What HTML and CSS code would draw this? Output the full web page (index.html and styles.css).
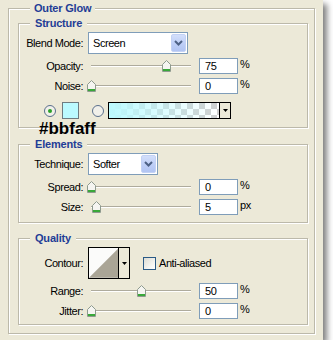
FILE: index.html
```html
<!DOCTYPE html>
<html>
<head>
<meta charset="utf-8">
<link rel="stylesheet" href="styles.css">
</head>
<body>
<div class="panel">
  <section class="group outer">
    <div class="title outer-title">Outer Glow</div>

    <section class="group sub structure">
      <div class="title">Structure</div>
      <div class="row tall">
        <span class="label">Blend Mode:</span>
        <div class="combo blend"><span class="val">Screen</span><span class="btn"><svg width="9" height="6" viewBox="0 0 9 6"><path d="M1 1 L4.5 4.5 L8 1" fill="none" stroke="#4d6185" stroke-width="2"/></svg></span></div>
      </div>
      <div class="row">
        <span class="label">Opacity:</span>
        <div class="slider"><span class="track"></span><span class="thumb" style="left:74px"><svg width="9" height="12" viewBox="0 0 9 12"><path d="M0.5 4.5 L4.5 0.5 L8.5 4.5 V11.5 H0.5 Z" fill="#f5f5f1" stroke="#8e9a8e"/><path d="M1 10 H8" stroke="#39a839" stroke-width="2"/></svg></span></div>
        <span class="num">75</span><span class="unit">%</span>
      </div>
      <div class="row">
        <span class="label">Noise:</span>
        <div class="slider"><span class="track"></span><span class="thumb" style="left:-1px"><svg width="9" height="12" viewBox="0 0 9 12"><path d="M0.5 4.5 L4.5 0.5 L8.5 4.5 V11.5 H0.5 Z" fill="#f5f5f1" stroke="#8e9a8e"/><path d="M1 10 H8" stroke="#39a839" stroke-width="2"/></svg></span></div>
        <span class="num">0</span><span class="unit">%</span>
      </div>
      <div class="colorrow">
        <span class="radio"><svg width="12" height="12" viewBox="0 0 12 12"><circle cx="6" cy="6" r="5.5" fill="#f1f0ea" stroke="#5a6f8c"/><circle cx="6" cy="6" r="2" fill="#2aa12a"/></svg></span>
        <span class="swatch"></span>
        <span class="radio r2"><svg width="12" height="12" viewBox="0 0 12 12"><circle cx="6" cy="6" r="5.5" fill="#f1f0ea" stroke="#5a6f8c"/></svg></span>
        <span class="gradbox"><span class="grad"></span><span class="arrow"><svg width="5" height="3" viewBox="0 0 5 3"><path d="M0 0 H5 L2.5 3 Z" fill="#000"/></svg></span></span>
      </div>
      <div class="annot">#bbfaff</div>
    </section>

    <section class="group sub elements">
      <div class="title">Elements</div>
      <div class="row tall">
        <span class="label">Technique:</span>
        <div class="combo tech"><span class="val">Softer</span><span class="btn"><svg width="9" height="6" viewBox="0 0 9 6"><path d="M1 1 L4.5 4.5 L8 1" fill="none" stroke="#4d6185" stroke-width="2"/></svg></span></div>
      </div>
      <div class="row">
        <span class="label">Spread:</span>
        <div class="slider"><span class="track"></span><span class="thumb" style="left:-1px"><svg width="9" height="12" viewBox="0 0 9 12"><path d="M0.5 4.5 L4.5 0.5 L8.5 4.5 V11.5 H0.5 Z" fill="#f5f5f1" stroke="#8e9a8e"/><path d="M1 10 H8" stroke="#39a839" stroke-width="2"/></svg></span></div>
        <span class="num">0</span><span class="unit">%</span>
      </div>
      <div class="row">
        <span class="label">Size:</span>
        <div class="slider"><span class="track"></span><span class="thumb" style="left:4px"><svg width="9" height="12" viewBox="0 0 9 12"><path d="M0.5 4.5 L4.5 0.5 L8.5 4.5 V11.5 H0.5 Z" fill="#f5f5f1" stroke="#8e9a8e"/><path d="M1 10 H8" stroke="#39a839" stroke-width="2"/></svg></span></div>
        <span class="num">5</span><span class="unit">px</span>
      </div>
    </section>

    <section class="group sub quality">
      <div class="title">Quality</div>
      <div class="row contour-row">
        <span class="label">Contour:</span>
        <span class="contour"><svg class="curve" width="30" height="30" viewBox="0 0 30 30"><rect width="30" height="30" fill="#fbfbfa"/><path d="M0 30 L30 0 V30 Z" fill="#aaa596"/></svg><span class="arrow"><svg width="5" height="3" viewBox="0 0 5 3"><path d="M0 0 H5 L2.5 3 Z" fill="#000"/></svg></span></span>
        <span class="check"></span><span class="checklabel">Anti-aliased</span>
      </div>
      <div class="row">
        <span class="label">Range:</span>
        <div class="slider"><span class="track"></span><span class="thumb" style="left:49px"><svg width="9" height="12" viewBox="0 0 9 12"><path d="M0.5 4.5 L4.5 0.5 L8.5 4.5 V11.5 H0.5 Z" fill="#f5f5f1" stroke="#8e9a8e"/><path d="M1 10 H8" stroke="#39a839" stroke-width="2"/></svg></span></div>
        <span class="num">50</span><span class="unit">%</span>
      </div>
      <div class="row">
        <span class="label">Jitter:</span>
        <div class="slider"><span class="track"></span><span class="thumb" style="left:-1px"><svg width="9" height="12" viewBox="0 0 9 12"><path d="M0.5 4.5 L4.5 0.5 L8.5 4.5 V11.5 H0.5 Z" fill="#f5f5f1" stroke="#8e9a8e"/><path d="M1 10 H8" stroke="#39a839" stroke-width="2"/></svg></span></div>
        <span class="num">0</span><span class="unit">%</span>
      </div>
    </section>
  </section>
</div>
</body>
</html>
```
FILE: styles.css
```css
html, body {
  margin: 0;
  padding: 0;
  background: #ffffff;
}
body {
  font-family: "Liberation Sans", Arial, sans-serif;
  font-size: 11px;
  letter-spacing: -0.45px;
  color: #000;
}
.panel {
  width: 323px;
  height: 340px;
  box-sizing: border-box;
  padding: 8px 0 0 8px;
  background: #ece9d8;
  box-shadow: 4px 4px 6px rgba(0, 0, 0, 0.5);
}
.group {
  border: 1px solid #bcb9aa;
  box-shadow: 1px 1px 0 #ffffff, inset 1px 1px 0 #ffffff;
  box-sizing: border-box;
}
.outer {
  width: 307px;
  padding: 0 6px 8px 9px;
}
.title {
  display: table;
  margin-top: -7px;
  margin-left: 11px;
  margin-bottom: 2px;
  padding: 0 5px;
  height: 13px;
  line-height: 13px;
  font-weight: bold;
  letter-spacing: -0.2px;
  color: #1f3d96;
  background: #ece9d8;
}
.outer-title {
  margin-left: 12px;
  padding: 0 4px;
  margin-bottom: 0;
}
.sub {
  position: relative;
}
.structure {
  margin-top: 8px;
  padding-bottom: 8px;
}
.elements {
  margin-top: 16px;
  padding-bottom: 7px;
}
.quality {
  margin-top: 15px;
  padding-bottom: 5px;
}
.row {
  display: flex;
  align-items: center;
  height: 16px;
}
.row + .row {
  margin-top: 4px;
}
.row.tall {
  height: 22px;
}
.label {
  width: 64px;
  margin-right: 5px;
  text-align: right;
  flex: none;
}
.combo {
  display: flex;
  height: 22px;
  box-sizing: border-box;
  border: 1px solid #7f9db9;
  background: #fff;
  padding: 1px;
}
.combo.blend { width: 100px; }
.combo.tech { width: 70px; }
.combo .val {
  flex: 1;
  padding-left: 3px;
  line-height: 18px;
}
.combo .btn {
  width: 15px;
  box-sizing: border-box;
  border: 1px solid #c3d2f5;
  border-radius: 2px;
  background: linear-gradient(180deg, #d3dffb 0%, #bccdf6 60%, #b1c4f2 100%);
  display: flex;
  align-items: center;
  justify-content: center;
}
.combo .btn svg { display: block; }
.slider {
  position: relative;
  width: 106px;
  height: 16px;
  margin-right: 5px;
  flex: none;
}
.track {
  position: absolute;
  left: 3px;
  top: 7px;
  width: 100px;
  height: 0;
  border-top: 1px solid #aeab9d;
  border-bottom: 1px solid #ffffff;
}
.thumb {
  position: absolute;
  top: 2px;
  width: 9px;
  height: 12px;
}
.thumb svg { display: block; }
.num {
  width: 39px;
  height: 16px;
  box-sizing: border-box;
  border: 1px solid #7f9db9;
  background: #fff;
  padding-left: 5px;
  line-height: 14px;
  flex: none;
}
.unit {
  margin-left: 2px;
  line-height: 12px;
  align-self: flex-start;
}
.colorrow {
  display: flex;
  align-items: center;
  height: 17px;
  margin-top: 8px;
  margin-left: 25px;
}
.radio {
  width: 12px;
  height: 12px;
  flex: none;
}
.radio svg { display: block; }
.swatch {
  width: 17px;
  height: 17px;
  box-sizing: border-box;
  margin-left: 6px;
  border: 1px solid #6f7b80;
  background: #bbfaff;
}
.radio.r2 {
  margin-left: 13px;
}
.gradbox {
  display: flex;
  width: 123px;
  height: 17px;
  box-sizing: border-box;
  margin-left: 4px;
  border: 1px solid #000;
}
.grad {
  flex: 1;
  background: linear-gradient(90deg, #bbfaff 0%, rgba(187, 250, 255, 0) 100%),
              repeating-conic-gradient(#cfcfcf 0 25%, #ffffff 0 50%) 0 0 / 12px 12px;
}
.gradbox .arrow {
  width: 10px;
  border-left: 1px solid #000;
  background: #ece9d8;
  display: flex;
  align-items: center;
  justify-content: center;
}
.arrow svg { display: block; }
.annot {
  position: absolute;
  left: 20px;
  top: 96px;
  font-size: 17px;
  line-height: 17px;
  font-weight: bold;
  letter-spacing: 0;
  color: #000;
}
.contour-row {
  height: 32px;
}
.contour {
  display: flex;
  width: 42px;
  height: 32px;
  box-sizing: border-box;
  border: 1px solid #000;
  background: #fff;
}
.contour .curve { display: block; }
.contour .arrow {
  width: 10px;
  border-left: 1px solid #000;
  background: #ece9d8;
  display: flex;
  align-items: center;
  justify-content: center;
}
.check {
  width: 13px;
  height: 13px;
  box-sizing: border-box;
  margin-left: 13px;
  border: 1px solid #2a5a86;
  background: linear-gradient(135deg, #dcdcd4 0%, #f6f6f3 70%, #ffffff 100%);
}
.checklabel {
  margin-left: 3px;
}
```
